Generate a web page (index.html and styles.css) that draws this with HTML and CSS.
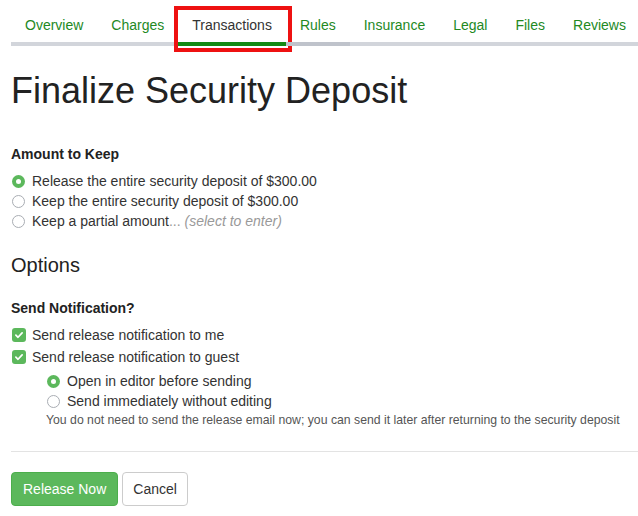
FILE: index.html
```html
<!DOCTYPE html>
<html lang="en">
  <head>
    <meta charset="UTF-8" />
    <meta name="viewport" content="width=device-width, initial-scale=1.0" />
    <title>Finalize Security Deposit</title>
    <link rel="stylesheet" href="styles.css">
  </head>
  <body>
    <div class="page">
      <!-- Tabs -->
      <ul class="tabs">
        <li class="tab">Overview</li>
        <li class="tab">Charges</li>
        <li class="tab active">Transactions</li>
        <li class="tab hover">Rules</li>
        <li class="tab">Insurance</li>
        <li class="tab">Legal</li>
        <li class="tab">Files</li>
        <li class="tab">Reviews</li>
      </ul>

      <h1>Finalize Security Deposit</h1>

      <div class="group-label">Amount to Keep</div>
      <div class="choice-list">
        <label class="choice"><span class="radio checked"></span>Release the entire security deposit of $300.00</label>
        <label class="choice"><span class="radio"></span>Keep the entire security deposit of $300.00</label>
        <label class="choice"><span class="radio"></span>Keep a partial amount<span class="muted">... <em>(select to enter)</em></span></label>
      </div>

      <h2>Options</h2>

      <div class="group-label notify-label">Send Notification?</div>
      <div class="check-list">
        <label class="choice check-row"><span class="checkbox"><svg viewBox="0 0 13 13" width="13" height="13"><path d="M3.6 6.7 L5.6 8.6 L9.4 4.6" fill="none" stroke="#fff" stroke-width="1.6" stroke-linecap="round" stroke-linejoin="round"/></svg></span>Send release notification to me</label>
        <label class="choice check-row"><span class="checkbox"><svg viewBox="0 0 13 13" width="13" height="13"><path d="M3.6 6.7 L5.6 8.6 L9.4 4.6" fill="none" stroke="#fff" stroke-width="1.6" stroke-linecap="round" stroke-linejoin="round"/></svg></span>Send release notification to guest</label>
      </div>

      <div class="sub-options">
        <label class="choice"><span class="radio checked"></span>Open in editor before sending</label>
        <label class="choice"><span class="radio"></span>Send immediately without editing</label>
        <p class="note">You do not need to send the release email now; you can send it later after returning to the security deposit</p>
      </div>

      <hr class="divider" />

      <div class="actions">
        <button type="button" class="btn btn-success">Release Now</button>
        <button type="button" class="btn btn-default">Cancel</button>
      </div>
    </div>
  </body>
</html>
```

FILE: styles.css
```css
/* Global Styles */
body {
  font-family: "Liberation Sans", Arial, sans-serif;
  font-size: 14px;
  line-height: 20px;
  color: #333;
  background-color: #fff;
  margin: 0;
  padding: 0;
}

.page {
  padding-left: 11px;
}

/* Tabs */
.tabs {
  display: flex;
  list-style: none;
  margin: 0;
  padding: 0;
  border-bottom: 4px solid #d2d5db;
}

.tab {
  position: relative;
  padding: 15px 14px 7px;
  margin-bottom: -4px;
  border-bottom: 4px solid transparent;
  color: #23891f;
  white-space: nowrap;
}

.tab.hover {
  border-bottom-color: #bfc3cb;
}

.tab.active {
  color: #333;
  border-bottom-color: #138a13;
}

/* red highlight box round the active tab */
.tab.active::after {
  content: "";
  position: absolute;
  top: 6px;
  bottom: -10px;
  left: -4px;
  right: -6px;
  border: 4px solid #ee1111;
}

h1 {
  font-size: 36px;
  line-height: 40px;
  font-weight: normal;
  color: #222;
  margin: 25px 0 0;
}

h2 {
  font-size: 20px;
  line-height: 22px;
  font-weight: normal;
  color: #222;
  margin: 23px 0 0;
}

.group-label {
  font-weight: bold;
  color: #222;
  margin-top: 33px;
}

.notify-label {
  margin-top: 22px;
}

.choice-list {
  margin-top: 7px;
}

.choice {
  display: flex;
  align-items: center;
  height: 20px;
}

.muted {
  color: #999;
}

/* Radios and checkboxes */
.radio,
.checkbox {
  flex: none;
  position: relative;
  width: 13px;
  height: 13px;
  margin: 0 7px 0 1px;
  box-sizing: border-box;
}

.radio {
  border: 1px solid #a9adb3;
  border-radius: 50%;
  background-color: #fff;
}

.radio.checked {
  border: none;
  background-color: #5cb85c;
}

.radio.checked::after {
  content: "";
  position: absolute;
  top: 4px;
  left: 4px;
  width: 5px;
  height: 5px;
  border-radius: 50%;
  background-color: #fff;
}

.checkbox {
  width: 14px;
  height: 14px;
  margin: 0 6px 0 1px;
  border-radius: 3px;
  background-color: #5cb85c;
}

.checkbox svg {
  display: block;
  width: 14px;
  height: 14px;
}

.check-list {
  margin-top: 7px;
}

.check-row + .check-row {
  margin-top: 2px;
}

.sub-options {
  margin-top: 4px;
  padding-left: 35px;
}

.note {
  font-size: 12.25px;
  line-height: 17px;
  color: #555;
  margin: 1px 0 0;
}

.divider {
  border: 0;
  border-top: 1px solid #e3e3e3;
  margin: 22px 0 0;
}

/* Buttons */
.actions {
  display: flex;
  gap: 4px;
  margin-top: 20px;
}

.btn {
  font-family: inherit;
  font-size: 14px;
  line-height: 20px;
  padding: 6px 11px;
  border-radius: 4px;
  border: 1px solid transparent;
  cursor: pointer;
}

.btn-success {
  background-color: #5cb85c;
  border-color: #4cae4c;
  color: #fff;
}

.btn-default {
  padding: 6px 10px;
  background-color: #fff;
  border-color: #ccc;
  color: #333;
}
```
